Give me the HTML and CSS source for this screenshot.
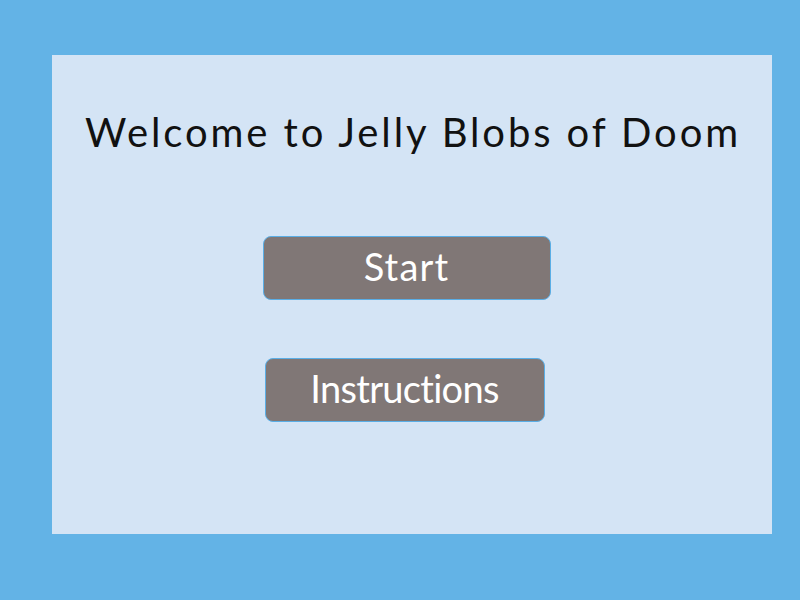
FILE: index.html
```html
<!DOCTYPE html>
<html>
<head>
<meta charset="utf-8">
<link rel="stylesheet" href="styles.css">
</head>
<body>
<main class="panel">
  <h1 class="title">Welcome to Jelly Blobs of Doom</h1>
  <div class="menu">
    <button class="btn btn-start">Start</button>
    <button class="btn btn-instructions">Instructions</button>
  </div>
</main>
</body>
</html>
```

FILE: styles.css
```css
html, body {
  margin: 0;
  padding: 0;
}
body {
  background: #63b3e6;
  width: 800px;
  height: 600px;
  overflow: hidden;
  font-family: "Lato", "DejaVu Sans", sans-serif;
  padding-top: 55px;
  padding-left: 52px;
  box-sizing: border-box;
}
.panel {
  width: 720px;
  height: 479px;
  background: #d4e4f5;
  display: flex;
  flex-direction: column;
  align-items: center;
}
.title {
  margin: 0 0 0 2px;
  padding-top: 53px;
  font-size: 40px;
  font-weight: 400;
  color: #111;
  letter-spacing: 2.9px;
  line-height: 48px;
}
.menu {
  display: flex;
  flex-direction: column;
  align-items: center;
  gap: 58px;
  margin-top: 80px;
}
.btn {
  background: #807776;
  color: #fff;
  border: 1px solid #5aaee6;
  border-radius: 8px;
  font-family: inherit;
  font-weight: 400;
  font-size: 38px;
  height: 64px;
  padding: 0 0 5px 0;
}
.btn-start {
  width: 288px;
  margin-right: 11px;
  letter-spacing: 1.2px;
}
.btn-instructions {
  width: 280px;
  margin-right: 15px;
  letter-spacing: -0.7px;
}
```
